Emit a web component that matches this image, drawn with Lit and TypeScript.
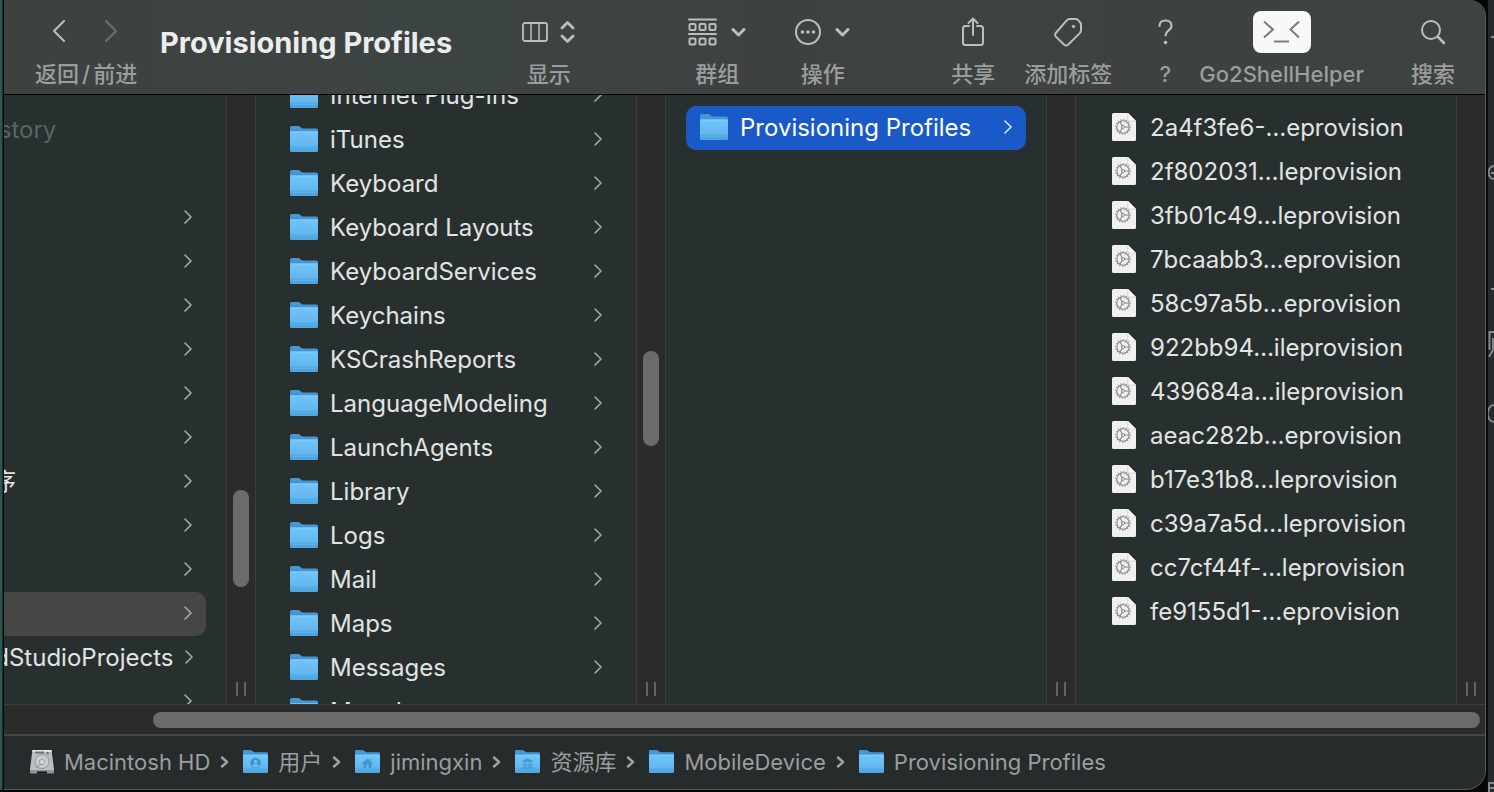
import { LitElement, html, svg, css, nothing, TemplateResult } from "lit";
import { customElement, property } from "lit/decorators.js";
import { classMap } from "lit/directives/class-map.js";
import { styleMap } from "lit/directives/style-map.js";

type Kind = "folder" | "document" | "none";

interface Entry {
  name: string;
  kind: Kind;
  dim?: boolean;
  selected?: "active" | "inactive";
  leaf?: boolean;
}

interface Column {
  label: string;
  offset: number;
  entries: Entry[];
  thumb?: { top: number; size: number };
}

const folder = (name = ""): Entry => ({ name, kind: "folder" });
const profile = (name: string): Entry => ({ name, kind: "document", leaf: true });

const COLUMNS: Column[] = [
  {
    label: "jimingxin",
    offset: 13,
    thumb: { top: 395, size: 97 },
    entries: [
      { name: ".zsh_history", kind: "document", dim: true, leaf: true },
      { name: "", kind: "none", leaf: true },
      folder(), folder(), folder(), folder(), folder(), folder(),
      folder("应用程序"),
      folder(), folder(),
      { name: "", kind: "folder", selected: "inactive" },
      folder("AndroidStudioProjects"),
      folder(),
    ],
  },
  {
    label: "资源库",
    offset: -21,
    thumb: { top: 256, size: 95 },
    entries: [
      "Internet Plug-Ins", "iTunes", "Keyboard", "Keyboard Layouts", "KeyboardServices",
      "Keychains", "KSCrashReports", "LanguageModeling", "LaunchAgents", "Library",
      "Logs", "Mail", "Maps", "Messages", "Metadata",
    ].map((name) => folder(name)),
  },
  {
    label: "MobileDevice",
    offset: 11,
    entries: [{ name: "Provisioning Profiles", kind: "folder", selected: "active" }],
  },
  {
    label: "Provisioning Profiles",
    offset: 11,
    entries: [
      "2a4f3fe6-…eprovision", "2f802031…leprovision", "3fb01c49…leprovision",
      "7bcaabb3…eprovision", "58c97a5b…eprovision", "922bb94…ileprovision",
      "439684a…ileprovision", "aeac282b…eprovision", "b17e31b8…leprovision",
      "c39a7a5d…leprovision", "cc7cf44f-…leprovision", "fe9155d1-…eprovision",
    ].map(profile),
  },
];

const folderIcon = (width: number, emblem: TemplateResult | typeof nothing = nothing) => html`
  <svg class="icon" width=${width} viewBox="0 0 28 28" aria-hidden="true">
    <defs>
      <linearGradient id="front" x1="0" y1="0" x2="0" y2="1">
        <stop offset="0" stop-color="#73c5f8" />
        <stop offset="0.75" stop-color="#5fb6ed" />
        <stop offset="1" stop-color="#4fa5de" />
      </linearGradient>
    </defs>
    <path d="M0 2.500a1.500 1.500 0 0 1 1.500-1.500h6.500c1 0 1.500.3 2.200.9l1.300 1c.6.5 1 .6 1.800.6H26.500A1.500 1.500 0 0 1 28 5V20H0z" fill="#4696d5" />
    <path d="M0 7.700a1.200 1.200 0 0 1 1.200-1.200H26.800A1.200 1.200 0 0 1 28 7.700V25.500a1.500 1.500 0 0 1-1.500 1.500H1.500A1.500 1.500 0 0 1 0 25.500z" fill="url(#front)" />
    <path d="M0.500 7h27" stroke="#8fd4fb" stroke-width="0.7" />
    <path d="M0 22.300h28M0 24.600h28" stroke="#3f93cf" stroke-width="0.7" opacity=".6" />
    ${emblem}
  </svg>`;

const documentIcon = html`
  <svg class="icon" width="24" height="28" viewBox="0 0 24 28" aria-hidden="true">
    <path d="M1.500 0H16l8 8v18.500A1.500 1.500 0 0 1 22.500 28h-21A1.500 1.500 0 0 1 0 26.500v-25A1.500 1.500 0 0 1 1.500 0z" fill="#f0f0f0" />
    <path d="M16 0l8 8h-7a1 1 0 0 1-1-1z" fill="#fff" stroke="#b5b8b8" stroke-width="0.6" />
    <g fill="none" stroke="#858787">
      <circle cx="11" cy="14" r="6.200" stroke-width="1.100" />
      <circle cx="11" cy="14" r="7.300" stroke-width="1.100" stroke-dasharray="1.100 1.766" />
      <circle cx="11" cy="14" r="1.500" stroke-width="1" />
      <path d="M12.500 14H17M10.200 12.700L8 8.800M10.200 15.300L8 19.200" stroke-width="1.100" />
    </g>
  </svg>`;

const diskIcon = html`
  <svg class="icon" width="24" viewBox="0 0 24 26" aria-hidden="true">
    <path d="M2.500 1h19L24 20v3.500H0V20z" fill="#b9bfc2" />
    <path d="M2.500 1h19l.3 2H2.200z" fill="#e4e7e8" />
    <path d="M0 21h24v2.500a1 1 0 0 1-1 1H1a1 1 0 0 1-1-1z" fill="#8e9497" />
    <path d="M7 22.500h10v2H7z" fill="#111" />
    <path d="M5 2.500h9v2H5z" fill="#6a7073" />
    <circle cx="17.500" cy="4" r="1.200" fill="#6a7073" />
    <circle cx="12" cy="12.500" r="7" fill="#c6ccd0" stroke="#8b9396" stroke-width="0.9" />
    <circle cx="12" cy="13" r="2.600" fill="#d5dadd" stroke="#8b9396" stroke-width="0.8" />
    <path d="M12 15.500c-3 0-5 1.500-6 3.500M17 6l3-2" stroke="#858d90" stroke-width="0.8" fill="none" />
  </svg>`;

const personEmblem = svg`<g opacity=".75"><circle cx="14" cy="15.500" r="5.800" fill="#2f83c2"/><circle cx="14" cy="14" r="2.100" fill="#6dc0f4"/><path d="M10.200 19a4.200 4.200 0 0 1 7.600 0 5 5 0 0 1-7.600 0z" fill="#6dc0f4"/></g>`;
const houseEmblem = svg`<g fill="#2f83c2" opacity=".65"><path d="M8 16l6-5.500 6 5.500-1 1-.7-.6V21.500H15.500v-4h-3v4H9.700v-5.100l-.7.6z"/><path d="M17 11h1.500v2.500L17 12.200z"/></g>`;
const libraryEmblem = svg`<path opacity=".6" d="M8 13.500l6-3.500 6 3.500v1H8zM9.500 15.500h1.500v4.500H9.500zM12 15.500h1.300v4.500H12zM14.800 15.500h1.300v4.500h-1.300zM17 15.500h1.500v4.500H17zM8 20.500h12v1.300H8z" fill="#2f83c2"/>`;

const chevron = html`
  <svg class="chevron" width="8" height="14" viewBox="0 0 8 14" aria-hidden="true">
    <path d="M1 1l6 6-6 6" />
  </svg>`;

@customElement("finder-column")
class FinderColumn extends LitElement {
  @property({ attribute: false }) column!: Column;

  static styles = css`
    :host { display: flex; justify-content: flex-end; min-width: 0; min-height: 0; overflow: hidden; }
    .list {
      box-sizing: border-box; list-style: none; margin: 0; padding: 0 20px;
      width: 380px; flex: none; overflow: hidden; background: #28302f;
    }
    .row {
      display: flex; align-items: center; gap: 12px; box-sizing: border-box;
      width: 100%; height: 44px; margin: 0; padding: 0 14px 2px;
      border: 0; border-radius: 10px; background: none; color: #e2e4e3;
      font: 400 24px/30px Inter, "Noto Sans CJK SC", sans-serif; text-align: left; white-space: nowrap;
    }
    .dim { color: #5c6261; }
    .active { background: #1959c8; color: #fff; }
    .inactive { background: #464646; }
    .slot { display: grid; place-items: center; width: 28px; flex: none; }
    .icon { display: block; }
    .name { flex: 1; padding-top: 2px; }
    .chevron { flex: none; fill: none; stroke: #a3a7a6; stroke-width: 1.6; stroke-linecap: round; stroke-linejoin: round; }
    .active .chevron { stroke: #dbe6fa; }
    .splitter {
      display: flex; flex-direction: column; align-items: center; justify-content: space-between;
      box-sizing: border-box; width: 30px; flex: none; padding-bottom: 8px;
      background: #2b2b2b; border: solid #3a3d3d; border-width: 0 1px;
    }
    :host(.last) .splitter { width: 29px; border-right-width: 0; }
    .thumb { width: 16px; border-radius: 8px; background: #6b6b6b; }
    .grip { box-sizing: border-box; width: 10px; height: 14px; margin-top: auto; border: solid #636363; border-width: 0 2px; }
  `;

  render() {
    const { entries, offset, thumb, label } = this.column;
    return html`
      <ul class="list" aria-label=${label}>
        ${entries.map((e, i) => html`
          <li style=${styleMap(i === 0 ? { marginTop: `${offset}px` } : {})}>
            <button class=${classMap({
              row: true, dim: !!e.dim,
              active: e.selected === "active", inactive: e.selected === "inactive",
            })}>
              <span class="slot">${e.kind === "folder" ? folderIcon(28) : e.kind === "document" ? documentIcon : nothing}</span>
              <span class="name">${e.name}</span>
              ${e.leaf ? nothing : chevron}
            </button>
          </li>`)}
      </ul>
      <div class="splitter">
        ${thumb ? html`<div class="thumb" style=${styleMap({ marginTop: `${thumb.top}px`, height: `${thumb.size}px` })}></div>` : nothing}
        <div class="grip"></div>
      </div>`;
  }
}

@customElement("app-root")
class AppRoot extends LitElement {
  static styles = css`
    :host { display: block; height: 100vh; overflow: hidden; background: #050607; font-family: Inter, "Noto Sans CJK SC", sans-serif; }
    .desktop { display: flex; height: 100%; }
    .edge { width: 3px; flex: none; margin: 0 1px 2px 0; background: linear-gradient(90deg, #2d5552 2px, #182d2c 2px); }
    .window {
      display: flex; flex-direction: column; flex: 1; min-width: 0; box-sizing: border-box; overflow: hidden; margin-bottom: 2px;
      background: #262c2c; border: solid #565b5b; border-width: 0 1px 1px 0; border-radius: 0 16px 20px 0;
    }
    .behind { width: 8px; flex: none; box-sizing: border-box; border-left: 2px solid #08090a; background: #262a2f; overflow: hidden; }
    .fragments { display: block; fill: none; stroke: #84888b; stroke-width: 2; }
    .toolbar {
      display: flex; align-items: flex-start; flex: none; height: 95px; box-sizing: border-box;
      padding: 8px 30px 0 31px; border-bottom: 1px solid #000;
      background: linear-gradient(90deg, #3d4241, #3c4443 30%, #3e4241 60%, #3d4340);
    }
    .nav { display: grid; gap: 5px; justify-items: center; width: 102px; }
    .nav-buttons { display: flex; gap: 40px; height: 46px; align-items: center; padding-right: 3px; }
    .slash { margin: 0 3px; }
    .title { flex: 1; min-width: 0; margin: 15px 0 0 23px; color: #ececec; font-size: 29px; line-height: 40px; font-weight: 700; white-space: nowrap; }
    .tool { display: grid; gap: 3px; justify-items: center; flex: none; padding: 0; border: 0; background: none; font-family: inherit; }
    .label { color: #9b9e9d; font-size: 22px; font-weight: 500; line-height: 30px; white-space: nowrap; }
    .glyphs { display: flex; align-items: center; height: 48px; gap: 14px; }
    .glyph { display: block; fill: none; stroke: #b9bfbe; stroke-width: 2; stroke-linecap: round; stroke-linejoin: round; }
    .plain { padding: 0; border: 0; background: none; }
    .faded .glyph { stroke: #6a706f; }
    .cluster { display: flex; flex: none; }
    .view { margin-right: 113px; }
    .view .glyphs { gap: 12px; }
    .arrange { gap: 49px; margin-right: 101px; }
    .actions { gap: 29px; }
    .help { width: 48px; margin-right: -19px; }
    .helper { margin-right: 18px; }
    .badge { display: block; box-sizing: border-box; width: 58px; height: 42px; border-radius: 8px; background: #f8f8f8; }
    .columns { display: flex; flex: 1; min-height: 0; }
    .column { flex: none; }
    .lead { flex: 1; }
    .scroller { flex: none; height: 32px; box-sizing: border-box; padding: 7px 5px 7px 149px; background: #2b2b2b; border: solid #3a3d3d; border-width: 1px 0; border-bottom: 2px solid #414646; }
    .scroll-thumb { height: 16px; border-radius: 8px; background: #6b6b6b; }
    .path { display: flex; align-items: center; flex: none; height: 53px; box-sizing: border-box; padding: 0 26px 2px; background: #262c2c; }
    .crumbs { display: flex; align-items: center; list-style: none; margin: 0; padding: 0; }
    .crumb { display: flex; align-items: center; }
    .link { display: flex; align-items: center; gap: 10px; color: #9b9e9e; font-size: 22px; line-height: 30px; font-weight: 400; text-decoration: none; white-space: nowrap; }
    .step { margin: 0 14px 0 10px; fill: none; stroke: #a0a4a3; stroke-width: 2.4; stroke-linecap: round; stroke-linejoin: round; }
    .icon { display: block; }
  `;

  private tool(label: string, glyphs: TemplateResult, extra = "") {
    return html`<button class="tool ${extra}"><span class="glyphs">${glyphs}</span><span class="label">${label}</span></button>`;
  }

  private crumb(name: string, icon: TemplateResult, last = false) {
    return html`
      <li class="crumb">
        <a class="link" href="#">${icon}<span>${name}</span></a>
        ${last ? nothing : html`<svg class="step" width="9" height="14" viewBox="0 0 9 14" aria-hidden="true"><path d="M2 2.500l5 4.500-5 4.500" /></svg>`}
      </li>`;
  }

  private columnClass(i: number) {
    return i === 0 ? "lead" : i === COLUMNS.length - 1 ? "column last" : "column";
  }

  render() {
    const down = html`<svg class="glyph" width="15" height="9" viewBox="0 0 15 9" aria-hidden="true"><path d="M2 1.500l5.500 5.500 5.500-5.500" stroke-width="3" /></svg>`;
    return html`
      <div class="desktop">
        <div class="edge"></div>
        <main class="window">
          <header class="toolbar">
            <div class="nav">
              <div class="nav-buttons">
                <button class="plain" aria-label="返回"><svg class="glyph" width="13" height="22" viewBox="0 0 13 22"><path d="M12 1L2 11l10 10" /></svg></button>
                <button class="plain faded" aria-label="前进"><svg class="glyph" width="13" height="22" viewBox="0 0 13 22"><path d="M1 1l10 10L1 21" /></svg></button>
              </div>
              <span class="label">返回<span class="slash">/</span>前进</span>
            </div>
            <h1 class="title">Provisioning Profiles</h1>
            <div class="cluster view">
              ${this.tool("显示", html`
                <svg class="glyph" width="26" height="20" viewBox="0 0 26 20" aria-hidden="true"><rect x="1" y="1" width="24" height="18" rx="2" stroke-width="1.800" /><path d="M9 1v18M17 1v18" stroke-width="1.500" /></svg>
                <svg class="glyph" width="15" height="22" viewBox="0 0 15 22" aria-hidden="true"><path d="M2 7l5.500-5.500L13 7M2 15l5.500 5.500L13 15" stroke-width="2.800" /></svg>`)}
            </div>
            <div class="cluster arrange">
              ${this.tool("群组", html`
                <svg class="glyph" width="29" height="28" viewBox="0 0 29 28" aria-hidden="true"><path d="M1 1.500h27M1 16h27" /><rect x="1.500" y="6" width="6" height="6" rx="1" /><rect x="11.500" y="6" width="6" height="6" rx="1" /><rect x="21.500" y="6" width="6" height="6" rx="1" /><rect x="1.500" y="20.500" width="6" height="6" rx="1" /><rect x="11.500" y="20.500" width="6" height="6" rx="1" /><rect x="21.500" y="20.500" width="6" height="6" rx="1" /></svg>${down}`)}
              ${this.tool("操作", html`
                <svg class="glyph" width="26" height="26" viewBox="0 0 26 26" aria-hidden="true"><circle cx="13" cy="13" r="12" /><path d="M7.500 13h0M13 13h0M18.500 13h0" stroke-width="3.600" /></svg>${down}`)}
            </div>
            <div class="cluster actions">
              ${this.tool("共享", html`<svg class="glyph" width="24" height="30" viewBox="0 0 24 30" aria-hidden="true"><path d="M8 9H4.500A2.500 2.500 0 0 0 2 11.500v14A2.500 2.500 0 0 0 4.500 28h15a2.500 2.500 0 0 0 2.500-2.500v-14A2.500 2.500 0 0 0 19.500 9H16M12 18V1.500M7.500 6L12 1.500 16.500 6" /></svg>`)}
              ${this.tool("添加标签", html`<svg class="glyph" width="30" height="30" viewBox="0 0 30 30" aria-hidden="true"><path d="M17 2h5.500a3.500 3.500 0 0 1 2.600 1.100l1.700 1.900a4 4 0 0 1 1.200 2.800V13a4.500 4.500 0 0 1-1.200 3.100L15 27.800a2.500 2.500 0 0 1-3.700 0L2.800 19.600a2.500 2.500 0 0 1 0-3.600L13.500 3.600A4.500 4.500 0 0 1 17 2z" /><circle cx="20.500" cy="9.500" r="1.200" fill="#b9bfbe" stroke-width="1" /></svg>`)}
              ${this.tool("?", html`<svg class="glyph" width="15" height="26" viewBox="0 0 15 26" aria-hidden="true"><path d="M1.500 7C1.500 3.500 4 1.500 7.500 1.500S13.500 3.500 13.500 7c0 4.500-6 4.500-6 9.500" stroke-width="2.200" /><path d="M7.500 23.500h0" stroke-width="3.600" /></svg>`, "help")}
              ${this.tool("Go2ShellHelper", html`<span class="badge"><svg width="58" height="42" viewBox="0 0 58 42" fill="none" stroke="#7a7d7d" stroke-width="2" aria-hidden="true"><path d="M11 10.500l9 8-9 8M46 10.500l-8.500 8 8.500 8M21 30.500h15" /></svg></span>`, "helper")}
              ${this.tool("搜索", html`<svg class="glyph" width="26" height="26" viewBox="0 0 26 26" aria-hidden="true"><circle cx="11" cy="11" r="9" /><path d="M17.700 17.700l6.300 6.300" stroke-width="2.600" /></svg>`)}
            </div>
          </header>
          <section class="columns">
            ${COLUMNS.map((c, i) => html`<finder-column class=${this.columnClass(i)} .column=${c}></finder-column>`)}
          </section>
          <div class="scroller"><div class="scroll-thumb"></div></div>
          <nav class="path" aria-label="路径">
            <ol class="crumbs">
              ${this.crumb("Macintosh HD", diskIcon)}
              ${this.crumb("用户", folderIcon(25, personEmblem))}
              ${this.crumb("jimingxin", folderIcon(25, houseEmblem))}
              ${this.crumb("资源库", folderIcon(25, libraryEmblem))}
              ${this.crumb("MobileDevice", folderIcon(25))}
              ${this.crumb("Provisioning Profiles", folderIcon(25), true)}
            </ol>
          </nav>
        </main>
        <div class="behind">
          <svg class="fragments" width="6" height="792" viewBox="0 0 6 792" aria-hidden="true">
            <path d="M3 37h3M3 289h3M1.500 350V332h4.500M5 338v12L1 357" />
            <path d="M6 166a5 6 0 0 0 0 13M3 173h3M6 405a6 8 0 0 0 0 17" />
            <path d="M0 783h6M1 783v9M1 788h5" />
          </svg>
        </div>
      </div>`;
  }
}
